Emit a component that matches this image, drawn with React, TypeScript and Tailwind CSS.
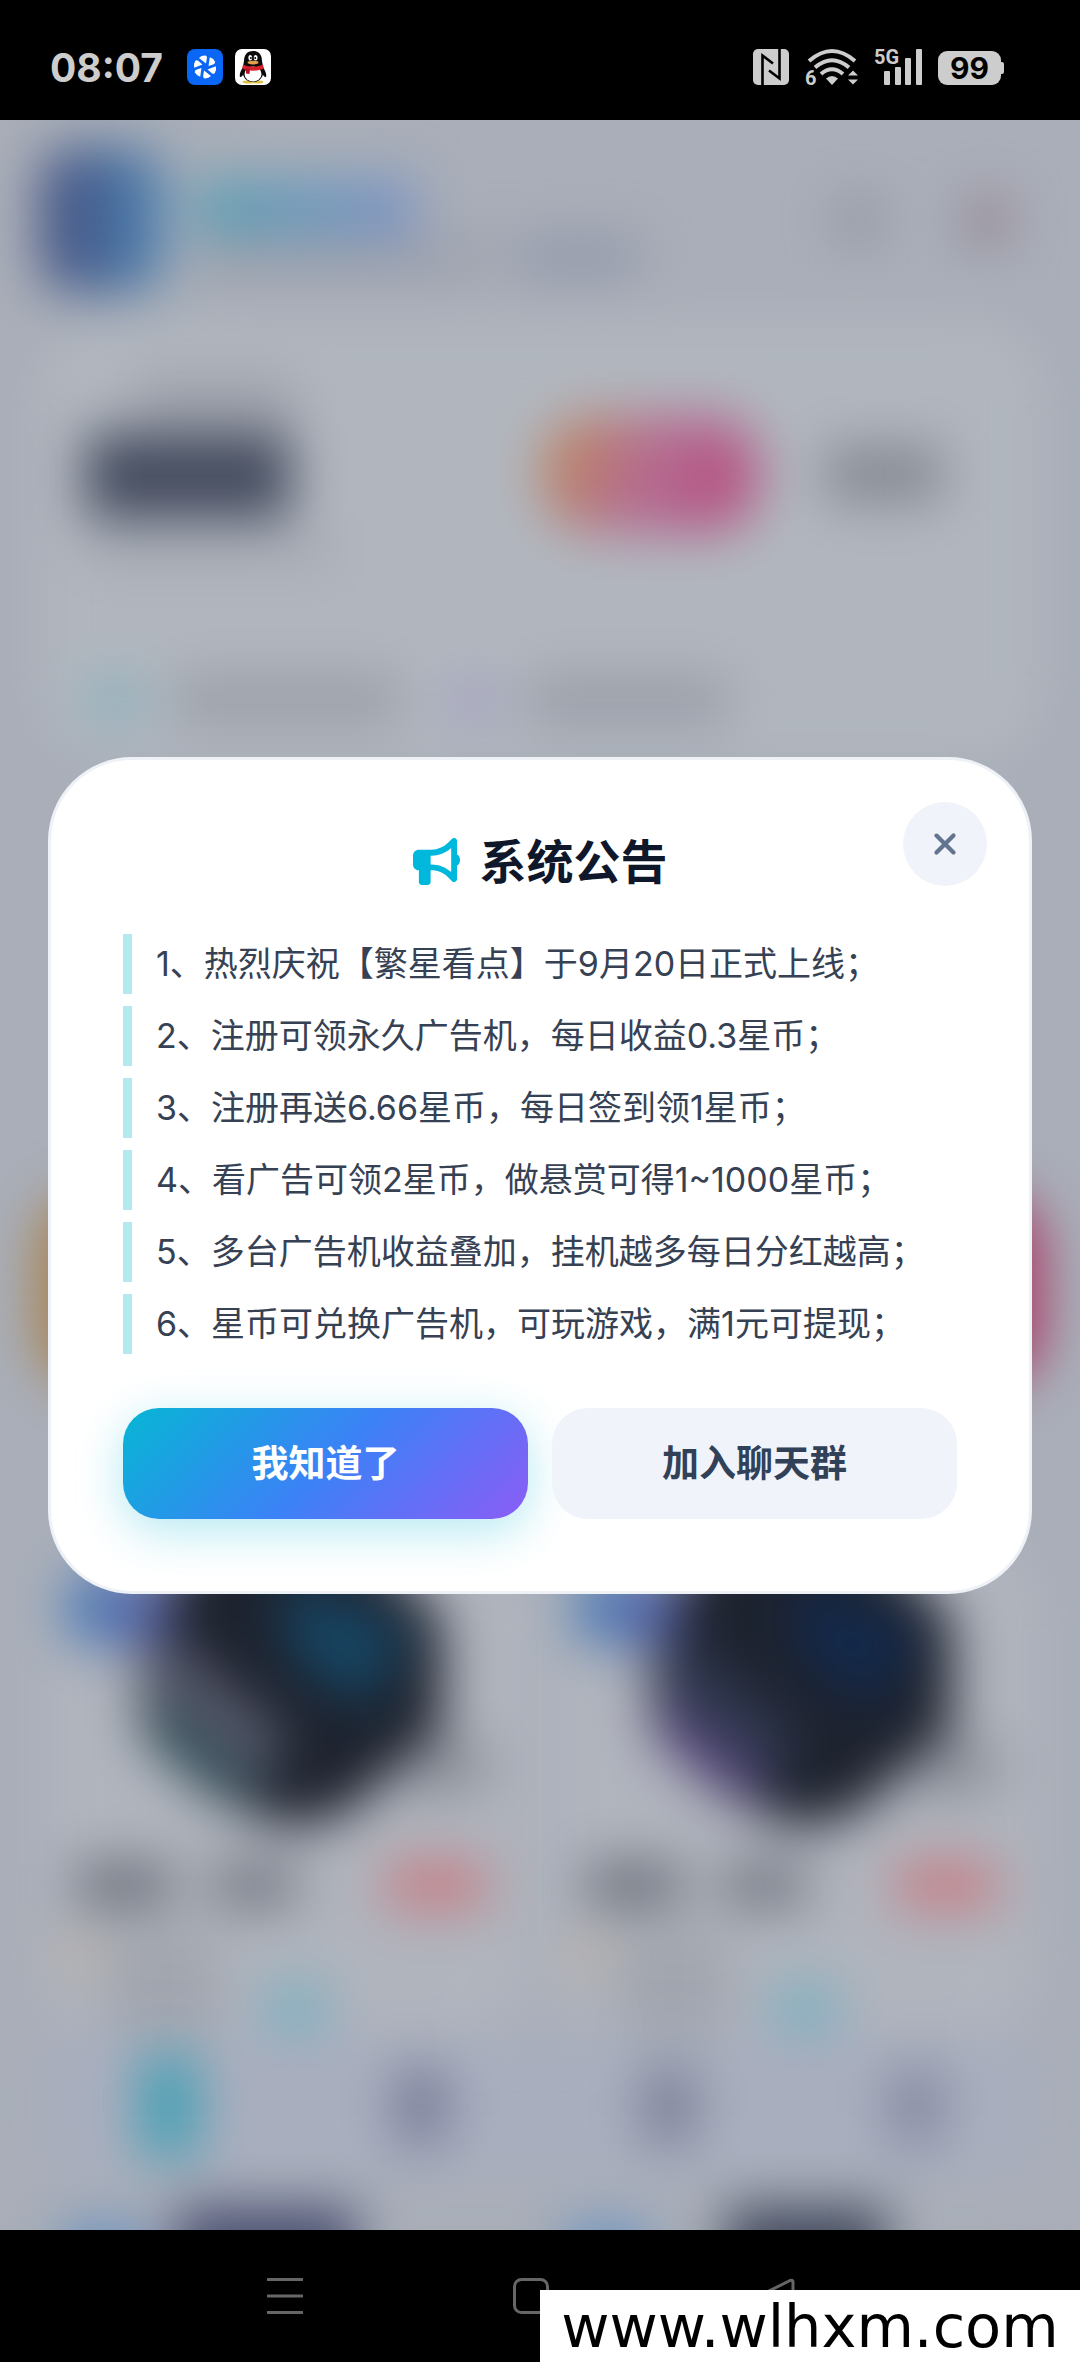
import { FaBullhorn, FaXmark } from "react-icons/fa6"

const notices = [
  "1、热烈庆祝【繁星看点】于9月20日正式上线；",
  "2、注册可领永久广告机，每日收益0.3星币；",
  "3、注册再送6.66星币，每日签到领1星币；",
  "4、看广告可领2星币，做悬赏可得1~1000星币；",
  "5、多台广告机收益叠加，挂机越多每日分红越高；",
  "6、星币可兑换广告机，可玩游戏，满1元可提现；",
]

function PinwheelIcon() {
  return (
    <svg viewBox="0 0 36 36" className="size-9" aria-hidden="true">
      <rect width="36" height="36" rx="8" fill="#0a66f5" />
      <g fill="#fff">
        {[0, 60, 120, 180, 240, 300].map((angle) => (
          <path
            key={angle}
            transform={`rotate(${angle} 18 18)`}
            d="M19 14.500 L12 9 Q14.500 6.300 18.500 6.600 Q20 7 19.900 9 Z"
          />
        ))}
      </g>
    </svg>
  )
}

function PenguinIcon() {
  return (
    <svg viewBox="0 0 36 36" className="size-9" aria-hidden="true">
      <rect width="36" height="36" rx="7" fill="#fff" />
      <ellipse cx="13.500" cy="33" rx="6" ry="1.600" fill="#e0c040" />
      <ellipse cx="22.500" cy="33" rx="6" ry="1.600" fill="#e0c040" />
      <path d="M9 17C6 21 4 25 5 28c1 .5 3-1.500 4-4zM27 17c3 4 5 8 4 11-1 .5-3-1.500-4-4z" fill="#0b0b0b" />
      <path d="M18 2c-6 0-9 4-9 10l-1.500 8c-.5 8 4 13 10.500 13s11-5 10.500-13L27 12c0-6-3-10-9-10z" fill="#0b0b0b" />
      <ellipse cx="18" cy="25" rx="8.500" ry="7.500" fill="#fff" />
      <path d="M8 15.500c6 3 14 3 20 0l.8 4c-6 3-15.600 3-21.600 0z" fill="#d8202c" />
      <path d="M11 19l4 1-.5 5-3.500-.5z" fill="#b3141f" />
      <ellipse cx="15.300" cy="8.800" rx="1.900" ry="2.800" fill="#fff" />
      <ellipse cx="20.700" cy="8.800" rx="1.900" ry="2.800" fill="#fff" />
      <circle cx="15.900" cy="9" r="1" fill="#0b0b0b" />
      <circle cx="20.200" cy="9" r="1" fill="#0b0b0b" />
      <ellipse cx="18" cy="13.600" rx="5.500" ry="1.800" fill="#e6a04a" />
    </svg>
  )
}

function NfcIcon() {
  return (
    <svg viewBox="0 0 36 36" className="size-9" aria-label="NFC">
      <rect width="36" height="36" rx="5" fill="#cdcdcd" />
      <path d="M9.500 36V6.500L20 14.500M26.500 0v29.500L16 21.500" fill="none" stroke="#000" strokeWidth="2.600" />
    </svg>
  )
}

function WifiIcon() {
  return (
    <svg viewBox="0 0 53 36" className="h-9 w-[53px] overflow-visible" aria-label="Wi-Fi">
      <g fill="none" stroke="#cdcdcd" strokeWidth="4">
        <path d="M4 12Q27 -8 50 12" />
        <path d="M10 18.500Q27 4 44 18.500" />
        <path d="M16 25Q27 15.500 38 25" />
      </g>
      <path d="M27 36l-6-6.500q6-5 12 0zM43 26.500l5-5 5 5zM43 30.500l5 5 5-5z" fill="#cdcdcd" />
      <text x="0" y="36" fontSize="20" fontWeight="700" fontFamily="Roboto, sans-serif" fill="#cdcdcd">
        6
      </text>
    </svg>
  )
}

function SignalIcon() {
  return (
    <svg viewBox="0 0 48 42" className="h-[42px] w-12 overflow-visible" aria-label="5G">
      <g fill="#cdcdcd">
        <rect x="10" y="28" width="6" height="14" rx="1" />
        <rect x="21" y="24" width="6" height="18" rx="1" />
        <rect x="31" y="15" width="6" height="27" rx="1" />
        <rect x="42" y="6" width="6" height="36" rx="1" />
      </g>
      <text x="0" y="21" fontSize="20" fontWeight="700" fontFamily="Roboto, sans-serif" fill="#cdcdcd">
        5G
      </text>
    </svg>
  )
}

function BatteryIcon() {
  return (
    <svg viewBox="0 0 66 34" className="h-[34px] w-[66px] overflow-visible" aria-label="99%">
      <rect width="63" height="34" rx="9" fill="#cdcdcd" />
      <path d="M62 11h2q2 0 2 2v8q0 2-2 2h-2z" fill="#cdcdcd" />
      <text x="31.500" y="28" textAnchor="middle" fontSize="30" fontWeight="700" fontFamily="Inter, sans-serif" fill="#000">
        99
      </text>
    </svg>
  )
}

function StatusBar() {
  return (
    <header className="flex h-[120px] shrink-0 items-center justify-between bg-black pt-3.5 pr-[76px] pl-[50px]">
      <div className="flex items-center gap-3">
        <span className="mr-3 font-[Inter,sans-serif] text-[39px] leading-none font-bold text-[#cdcdcd]">08:07</span>
        <PinwheelIcon />
        <PenguinIcon />
      </div>
      <div className="flex h-9 items-end gap-4">
        <NfcIcon />
        <WifiIcon />
        <SignalIcon />
        <BatteryIcon />
      </div>
    </header>
  )
}

function MachineShape({ glow, tint, accent }: { glow: string; tint: string; accent: string }) {
  return (
    <svg viewBox="0 0 400 330" className="h-[330px] w-full" preserveAspectRatio="none">
      <path d="M110 0H260L340 80V190L250 275L200 290L120 255L60 190V110Z" fill="#1d222e" />
      <path d="M60 150L170 240L150 270L70 210Z" fill={tint} />
      <path d="M80 90L200 200L170 245L60 150Z" fill={accent} />
      <path d="M190 40L310 90L270 170L200 120Z" fill={glow} />
      <path d="M340 190L395 225L365 255L300 255Z" fill="#8a8e97" />
    </svg>
  )
}

function MachineCard({ glow, tint, accent }: { glow: string; tint: string; accent: string }) {
  return (
    <div className="rounded-[60px] bg-[#b0b4bd] px-6">
      <div className="flex h-[322px] items-start">
        <div className="z-10 mt-8 h-[76px] w-[104px] shrink-0 rounded-3xl bg-linear-to-r from-[#4b84b8] to-[#5b5fa8]" />
        <div className="-ml-[90px] grow">
          <MachineShape glow={glow} tint={tint} accent={accent} />
        </div>
      </div>
      <div className="flex h-[50px] items-center gap-10 px-3">
        <div className="h-11 w-[96px] bg-[#6c717b]" />
        <div className="h-11 w-[84px] bg-[#737882]" />
        <div className="mr-2 ml-auto h-12 w-[100px] bg-[#c67f86]" />
      </div>
      <div className="mt-6 flex h-[100px] gap-5 px-2">
        <div className="h-10 w-4 bg-[#c4ab90]" />
        <div className="h-full w-[110px] bg-[#a1a5ae]" />
        <div className="mt-12 ml-6 h-14 w-[66px] bg-[#7fb0c0]" />
      </div>
    </div>
  )
}

// Home page as it shows through the frosted overlay
function Backdrop() {
  return (
    <div className="absolute inset-0 overflow-hidden bg-[#a9aeb8]" aria-hidden="true">
      <div className="flex flex-col blur-[26px]">
        <div className="flex h-[200px] items-center gap-8 pr-[70px] pl-10">
          <div className="h-[146px] w-[124px] rounded-[36px] bg-linear-to-r from-[#424c7c] to-[#4a84b4]" />
          <div className="flex flex-col gap-1">
            <div className="mt-3 h-[58px] w-[220px] bg-linear-to-r from-[#5a9fb2] to-[#7d92c4]" />
            <div className="flex gap-8">
              <div className="h-8 w-[290px] bg-[#989daa]" />
              <div className="h-8 w-[120px] bg-[#8e93a8]" />
            </div>
          </div>
          <div className="ml-auto h-10 w-10 rounded-full bg-[#858a94]" />
          <div className="ml-14 h-12 w-11 rounded-full bg-linear-to-bl from-[#b08492] to-[#737884]" />
        </div>

        <div className="mx-10 flex h-[440px] flex-col rounded-[60px] bg-[#b1b6be] px-[46px] pt-[54px]">
          <div className="flex h-[200px] items-center">
            <div className="flex flex-col gap-4">
              <div className="ml-12 h-9 w-[160px] bg-[#989ca6]" />
              <div className="h-[86px] w-[205px] bg-[#454c5f]" />
              <div className="h-8 w-[250px] bg-[#a4a9b2]" />
            </div>
            <div className="ml-auto h-[116px] w-[216px] rounded-[50px] bg-linear-110 from-[#c08a4c] via-[#b46a92] to-[#b6477a]" />
            <div className="mr-[52px] ml-[68px] h-14 w-[116px] bg-[#858a92]" />
          </div>
          <div className="mt-[104px] flex h-11 items-center gap-8">
            <div className="h-full w-14 rounded-full bg-[#86b2bf]" />
            <div className="h-11 w-[226px] bg-[#989da6]" />
            <div className="ml-4 h-full w-12 rounded-full bg-[#a29ec3]" />
            <div className="h-11 w-[200px] bg-[#969ba5]" />
          </div>
        </div>

        <div className="mx-9 mt-[430px] h-[200px] rounded-[60px] bg-linear-to-r from-[#a8834c] via-[#a5677f] to-[#a83c66]" />

        <div className="mt-[148px] grid grid-cols-2 gap-5 px-10">
          <MachineCard glow="#164563" tint="#2b4a54" accent="#555869" />
          <MachineCard glow="#12294c" tint="#54447a" accent="#30384f" />
        </div>

        <div className="mx-10 flex h-[144px] items-center justify-around bg-[#a9aebe]">
          <div className="h-[104px] w-[62px] bg-[#4aa0b5]" />
          <div className="h-[76px] w-[52px] bg-[#777c98]" />
          <div className="h-[76px] w-[52px] bg-[#7a7f97]" />
          <div className="h-[76px] w-[52px] bg-[#8388a0]" />
        </div>

        <div className="mt-7 grid grid-cols-2 gap-5 px-16">
          <div className="flex gap-8">
            <div className="mt-5 h-24 w-20 bg-[#668fc0]" />
            <div className="h-24 w-[180px] bg-[#4c5172]" />
          </div>
          <div className="flex gap-20 pl-4">
            <div className="mt-5 h-24 w-20 bg-[#6690c2]" />
            <div className="h-24 w-[160px] bg-[#444b5e]" />
          </div>
        </div>
      </div>
    </div>
  )
}

function NoticeDialog() {
  return (
    <section
      role="dialog"
      aria-labelledby="notice-title"
      className="relative mx-12 grow rounded-[84px] border-[3px] border-[#eef1f6] bg-white p-[72px] font-[Inter,'Noto_Sans_CJK_SC',sans-serif]"
    >
      <button
        type="button"
        aria-label="关闭"
        className="absolute top-[42px] right-[42px] flex size-[84px] items-center justify-center rounded-full bg-[#f0f3fa] text-[34px] text-slate-500"
      >
        <FaXmark />
      </button>

      <h2
        id="notice-title"
        className="flex items-center justify-center gap-5 text-[47px] leading-[60px] font-bold text-slate-900"
      >
        <FaBullhorn className="text-cyan-500" />
        系统公告
      </h2>

      <ul className="mt-[42px] flex flex-col gap-3">
        {notices.map((notice) => (
          <li key={notice} className="border-l-[9px] border-[#b4e9ee] pl-6 text-[34px] leading-[60px] text-gray-700">
            {notice}
          </li>
        ))}
      </ul>

      <div className="mt-[54px] grid grid-cols-2 gap-6 text-[37px] leading-[55px] font-bold">
        <button
          type="button"
          className="rounded-[36px] bg-linear-[135deg,#06b6d4,#3b82f6_50%,#8b5cf6] py-7 text-white shadow-[0_12px_48px_rgba(6,182,212,0.3)]"
        >
          我知道了
        </button>
        <button type="button" className="rounded-[36px] bg-[#f0f3fa] py-7 text-slate-700">
          加入聊天群
        </button>
      </div>
    </section>
  )
}

function SystemNav() {
  return (
    <nav className="flex h-[132px] shrink-0 items-center justify-center gap-[210px] bg-black pr-[18px] text-[#666]">
      <button type="button" aria-label="最近任务">
        <svg viewBox="0 0 36 36" className="size-9" stroke="currentColor" strokeWidth="3">
          <path d="M0 1.500H36M0 18H36M0 34.500H36" />
        </svg>
      </button>
      <button type="button" aria-label="主屏幕">
        <svg viewBox="0 0 36 36" className="size-9" fill="none" stroke="currentColor" strokeWidth="3">
          <rect x="1.500" y="1.500" width="33" height="33" rx="7" />
        </svg>
      </button>
      <button type="button" aria-label="返回">
        <svg viewBox="0 0 36 36" className="size-9" fill="none" stroke="currentColor" strokeWidth="3" strokeLinejoin="round">
          <path d="M31 2.500L3 16.500Q1 18 3 19.500L31 33.500Q34 34.500 34 32V4Q34 1.500 31 2.500Z" />
        </svg>
      </button>
    </nav>
  )
}

export default function App() {
  return (
    <div className="relative flex min-h-screen flex-col bg-black">
      <StatusBar />
      <main className="relative flex grow items-center">
        <Backdrop />
        <NoticeDialog />
      </main>
      <SystemNav />
      <div className="absolute right-0 bottom-0 flex h-[72px] w-1/2 items-center justify-center bg-white font-['DejaVu_Sans',sans-serif] text-[59px] leading-none text-black">
        www.wlhxm.com
      </div>
    </div>
  )
}
